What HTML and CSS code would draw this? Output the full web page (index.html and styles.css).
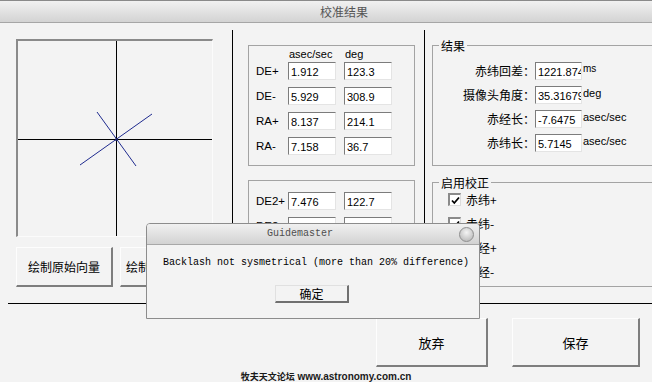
FILE: index.html
```html
<!DOCTYPE html>
<html lang="zh">
<head>
<meta charset="utf-8">
<title>校准结果</title>
<link rel="stylesheet" href="styles.css">
</head>
<body>
<div class="window">
  <div class="titlebar">校准结果</div>
  <div class="content">
    <div class="left">
      <div class="canvas">
        <svg width="194" height="195" viewBox="0 0 194 195">
          <line x1="0" y1="98.5" x2="194" y2="98.5" stroke="#000" stroke-width="1"/>
          <line x1="98.5" y1="0" x2="98.5" y2="195" stroke="#000" stroke-width="1"/>
          <line x1="79" y1="71" x2="118" y2="125" stroke="#1f2b8f" stroke-width="1"/>
          <line x1="62" y1="124" x2="134" y2="73" stroke="#1f2b8f" stroke-width="1"/>
          <circle cx="98.5" cy="98.5" r="1.5" fill="#1a1f5e"/>
        </svg>
      </div>
      <div class="btn-row">
        <button class="btn btn-draw">绘制原始向量</button>
        <button class="btn btn-draw">绘制校正后向量</button>
      </div>
    </div>
    <div class="mid">
      <div class="group g1">
        <div class="head"><span>asec/sec</span><span>deg</span></div>
        <div class="rows">
          <span class="lbl">DE+</span><input class="field" value="1.912" readonly><input class="field" value="123.3" readonly>
          <span class="lbl">DE-</span><input class="field" value="5.929" readonly><input class="field" value="308.9" readonly>
          <span class="lbl">RA+</span><input class="field" value="8.137" readonly><input class="field" value="214.1" readonly>
          <span class="lbl">RA-</span><input class="field" value="7.158" readonly><input class="field" value="36.7" readonly>
        </div>
      </div>
      <div class="group g2">
        <div class="rows">
          <span class="lbl">DE2+</span><input class="field" value="7.476" readonly><input class="field" value="122.7" readonly>
          <span class="lbl">DE2-</span><input class="field" value="3.852" readonly><input class="field" value="288.1" readonly>
          <span class="lbl">RA2+</span><input class="field" value="8.021" readonly><input class="field" value="213.5" readonly>
          <span class="lbl">RA2-</span><input class="field" value="7.203" readonly><input class="field" value="35.9" readonly>
        </div>
      </div>
    </div>
    <div class="right">
      <div class="group res">
        <span class="legend">结果</span>
        <div class="res-grid">
          <span class="rl">赤纬回差：</span><input class="field w47" value="1221.874" readonly><span class="unit small">ms</span>
          <span class="rl">摄像头角度：</span><input class="field w47" value="35.31679" readonly><span class="unit">deg</span>
          <span class="rl">赤经长：</span><input class="field w47" value="-7.6475" readonly><span class="unit">asec/sec</span>
          <span class="rl">赤纬长：</span><input class="field w47" value="5.7145" readonly><span class="unit">asec/sec</span>
        </div>
      </div>
      <div class="group corr">
        <span class="legend">启用校正</span>
        <div class="checks">
          <label class="chk"><span class="box"><svg width="9" height="9" viewBox="0 0 9 9"><polyline points="1,4.5 3.3,7 8,1.5" fill="none" stroke="#000" stroke-width="1.8"/></svg></span>赤纬+</label>
          <label class="chk"><span class="box"><svg width="9" height="9" viewBox="0 0 9 9"><polyline points="1,4.5 3.3,7 8,1.5" fill="none" stroke="#000" stroke-width="1.8"/></svg></span>赤纬-</label>
          <label class="chk"><span class="box"><svg width="9" height="9" viewBox="0 0 9 9"><polyline points="1,4.5 3.3,7 8,1.5" fill="none" stroke="#000" stroke-width="1.8"/></svg></span>赤经+</label>
          <label class="chk"><span class="box"><svg width="9" height="9" viewBox="0 0 9 9"><polyline points="1,4.5 3.3,7 8,1.5" fill="none" stroke="#000" stroke-width="1.8"/></svg></span>赤经-</label>
        </div>
      </div>
    </div>
  </div>
  <div class="hsep"></div>
  <div class="bottom">
    <div class="actions">
      <button class="btn big b1">放弃</button>
      <button class="btn big b2">保存</button>
    </div>
    <div class="watermark"><span class="wm-cn">牧夫天文论坛</span> www.astronomy.com.cn</div>
  </div>
</div>

<div class="dialog">
  <div class="dlg-title">Guidemaster<span class="dlg-close"></span></div>
  <div class="dlg-msg">Backlash not sysmetrical (more than 20% difference)</div>
  <div class="dlg-actions"><button class="btn dlg-ok">确定</button></div>
</div>
</body>
</html>
```

FILE: styles.css
```css
* { box-sizing: border-box; }
html, body { margin: 0; padding: 0; }
body {
  width: 652px;
  height: 382px;
  overflow: hidden;
  position: relative;
  background: #f3f3f3;
  font-family: "Liberation Sans", "Noto Sans CJK SC", sans-serif;
  font-size: 11px;
  color: #000;
}
.window { width: 652px; height: 382px; overflow: hidden; }

.titlebar {
  height: 23px;
  border-top: 1px solid #8a8a8a;
  border-bottom: 1px solid #a6a6a6;
  background: linear-gradient(#f1f1f1, #d3d3d3);
  text-align: center;
  padding-left: 36px;
  font: 12px/21px "Noto Sans CJK SC", sans-serif;
  color: #555;
}

.content { display: flex; height: 280px; }

.left { width: 232px; flex: none; padding: 16px 0 0 16px; }
.canvas {
  width: 197px;
  height: 198px;
  border-left: 2px solid #8a8a8a;
  border-top: 2px solid #8a8a8a;
  border-right: 1px solid #fbfbfb;
  border-bottom: 1px solid #fbfbfb;
}
.canvas svg { display: block; }
.btn-row { display: flex; gap: 7px; margin-top: 10px; }

.btn {
  font: 12px "Noto Sans CJK SC", sans-serif;
  background: #f3f3f3;
  color: #000;
  border-style: solid;
  border-width: 1px 2px 2px 1px;
  border-color: #fdfdfd #7d7d7d #7d7d7d #fdfdfd;
  padding: 0;
  flex: none;
}
.btn-draw { width: 97px; height: 40px; white-space: nowrap; overflow: hidden; }

.mid {
  width: 193px;
  flex: none;
  height: 273px;
  margin-top: 7px;
  border-left: 1px solid #000;
  border-right: 1px solid #000;
  padding: 15px 0 0 15px;
}
.group { border: 1px solid #a3a3a3; position: relative; }
.g1 { width: 167px; height: 121px; }
.g2 { width: 167px; height: 104px; margin-top: 14px; }
.head {
  display: grid;
  grid-template-columns: 56px auto;
  padding-left: 40px;
  margin-top: 1px;
  height: 14px;
  line-height: 14px;
  font-size: 11px;
}
.rows {
  display: grid;
  grid-template-columns: 24px 48px 48px;
  grid-auto-rows: 18px;
  column-gap: 8px;
  row-gap: 7px;
  padding-left: 7px;
  margin-top: 1px;
  align-items: center;
}
.g2 .rows { margin-top: 11px; }
.lbl { font-size: 11.5px; line-height: 14px; white-space: nowrap; }

.field {
  width: 48px;
  height: 18px;
  margin: 0;
  padding: 2px 0 0 2px;
  border: 1px solid;
  border-color: #7c7c7c #e4e4e4 #e4e4e4 #7c7c7c;
  background: #fff;
  color: #000;
  font: 11px "Liberation Sans", sans-serif;
  outline: none;
}
.field.w47 { width: 47px; }

.right { flex: 1; min-width: 0; padding: 22px 0 0 7px; }
.res { width: 240px; height: 121px; }
.corr { width: 240px; height: 105px; margin-top: 16px; }
.legend {
  position: absolute;
  top: -7px;
  left: 6px;
  padding: 0 2px;
  background: #f3f3f3;
  font: 12px/14px "Noto Sans CJK SC", sans-serif;
}
.res-grid {
  display: grid;
  grid-template-columns: 102px 47px auto;
  grid-auto-rows: 18px;
  row-gap: 6px;
  margin-top: 16px;
  align-items: center;
}
.rl { text-align: right; font: 12px/14px "Noto Sans CJK SC", sans-serif; }
.unit { padding-left: 1px; font-size: 11px; line-height: 12px; margin-top: -4px; }
.unit.small { font-size: 10px; }

.checks {
  display: flex;
  flex-direction: column;
  gap: 11px;
  padding: 10px 0 0 15px;
}
.chk {
  display: flex;
  align-items: center;
  gap: 5px;
  height: 13px;
  font: 12px/14px "Noto Sans CJK SC", sans-serif;
}
.box {
  width: 13px;
  height: 13px;
  flex: none;
  background: #fff;
  border-style: solid;
  border-width: 2px 1px 1px 2px;
  border-color: #8a8a8a #dcdcdc #dcdcdc #8a8a8a;
  display: flex;
  align-items: center;
  justify-content: center;
}
.box svg { display: block; }

.hsep { margin-left: 8px; border-top: 1px solid #000; }
.bottom { padding-top: 14px; }
.actions { display: flex; justify-content: flex-end; gap: 24px; padding-right: 12px; }
.big { height: 49px; font-size: 13px; }
.b1 { width: 112px; }
.b2 { width: 128px; }
.watermark {
  margin-top: 4px;
  text-align: center;
  font: bold 10px/12px "Liberation Sans", sans-serif;
  color: #1a1a1a;
}
.wm-cn { font-family: "Noto Sans CJK SC", sans-serif; font-size: 9px; }

.dialog {
  position: absolute;
  left: 146px;
  top: 223px;
  width: 334px;
  height: 96px;
  border: 1px solid #8c8c8c;
  border-radius: 4px 4px 0 0;
  background: #f3f3f3;
}
.dlg-title {
  position: relative;
  height: 21px;
  border-bottom: 1px solid #a8a8a8;
  border-radius: 3px 3px 0 0;
  background: linear-gradient(#f0f0f0, #d2d2d2);
  text-align: center;
  padding-right: 26px;
  font: 10px/20px "Liberation Mono", monospace;
  color: #4e4e4e;
}
.dlg-close {
  position: absolute;
  top: 3px;
  right: 5px;
  width: 15px;
  height: 15px;
  border-radius: 50%;
  border: 1px solid #8e8e8e;
  background: radial-gradient(circle at 50% 35%, #f4f4f4, #c4c4c4 70%, #b0b0b0);
}
.dlg-msg {
  margin-top: 12px;
  padding-left: 16px;
  font: 10px/12px "Liberation Mono", monospace;
  white-space: nowrap;
}
.dlg-actions { display: flex; justify-content: center; margin-top: 16px; padding-right: 2px; }
.dlg-ok {
  width: 74px;
  height: 18px;
  border-width: 1px 2px 2px 1px;
  border-color: #e0e0e0 #707070 #707070 #e0e0e0;
  font: 12px/14px "Noto Sans CJK SC", sans-serif;
}
```
